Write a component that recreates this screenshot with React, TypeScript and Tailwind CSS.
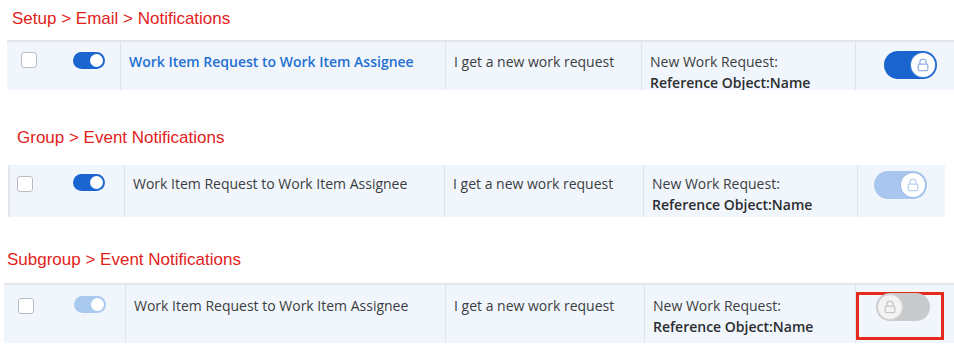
import React from 'react';

type Mode = 'on' | 'soft' | 'off';

function Lock({ color }: { color: string }) {
  return (
    <svg width="16" height="16" viewBox="0 0 14 14" fill="none" stroke={color} strokeWidth="1.1">
      <path d="M4.3 6.3V4.5a2.7 2.7 0 0 1 5.4 0v1.8" />
      <rect x="2.8" y="6.3" width="8.4" height="5.6" rx="1" />
    </svg>
  );
}

function SmallToggle({ soft }: { soft?: boolean }) {
  return (
    <div
      className={`flex h-[17px] w-[32px] items-center justify-end rounded-full pr-[2px] ${
        soft ? 'bg-[#a9c9ef]' : 'bg-[#1b65d1]'
      }`}
    >
      <div className="h-[13px] w-[13px] rounded-full bg-white" />
    </div>
  );
}

function LockToggle({ mode }: { mode: Mode }) {
  if (mode === 'off') {
    return (
      <div className="flex h-[28px] w-[54px] items-center rounded-full bg-[#c9cacc] pl-[1px]">
        <div className="flex h-[26px] w-[26px] items-center justify-center rounded-full border border-[#d4d5d7] bg-[#f3f3f4]">
          <Lock color="#c4c5c8" />
        </div>
      </div>
    );
  }
  const soft = mode === 'soft';
  return (
    <div
      className={`flex h-[28px] w-[53px] items-center justify-end rounded-full pr-[2px] ${
        soft ? 'bg-[#a9c7ee]' : 'bg-[#1a64cf]'
      }`}
    >
      <div
        className={`flex h-[24px] w-[24px] items-center justify-center rounded-full bg-white ring-1 ${
          soft ? 'ring-[#9dbde8]' : 'ring-[#3f7fd8]'
        }`}
      >
        <Lock color={soft ? '#b9cff0' : '#8fb1e6'} />
      </div>
    </div>
  );
}

function Checkbox() {
  return <div className="h-[16px] w-[16px] rounded-[3px] border border-[#b9bdc3] bg-white" />;
}

export default function App() {
  const table = "font-['Open_Sans',sans-serif] text-[14px] leading-[21px] text-[#3b3d40]";
  const head = "font-['Liberation_Sans',Arial,sans-serif] text-[17px] text-[#e2231a]";

  return (
    <div className="h-[348px] w-[954px] overflow-hidden bg-white">
      {/* Setup > Email > Notifications */}
      <div className={`flex h-[40px] items-start pl-[12px] pt-[6px] ${head}`}>Setup &gt; Email &gt; Notifications</div>
      <div className={`ml-[7px] flex h-[50px] overflow-hidden border-t-2 border-[#e3e5e8] bg-[#f1f6fc] ${table}`}>
        <div className="flex w-[113px] shrink-0 items-start pt-[10px]">
          <div className="ml-[14px]"><Checkbox /></div>
          <div className="ml-[36px]"><SmallToggle /></div>
        </div>
        <div className="w-[325px] shrink-0 border-l border-[#dfe4ea] pl-[8px] pt-[9px] font-semibold text-[#2470d2]">
          Work Item Request to Work Item Assignee
        </div>
        <div className="w-[196px] shrink-0 border-l border-[#dfe4ea] pl-[8px] pt-[9px]">I get a new work request</div>
        <div className="w-[214px] shrink-0 border-l border-[#dfe4ea] pl-[8px] pt-[9px]">
          New Work Request:
          <div className="font-semibold text-[#2a2c2f]">Reference Object:Name</div>
        </div>
        <div className="flex flex-1 items-start border-l border-[#dfe4ea] pl-[28px] pt-[9px]">
          <LockToggle mode="on" />
        </div>
      </div>

      {/* Group > Event Notifications */}
      <div className={`mt-[29px] flex h-[46px] items-start pl-[17px] pt-[6px] ${head}`}>Group &gt; Event Notifications</div>
      <div className={`ml-[8px] flex h-[52px] w-[937px] overflow-hidden border-l-2 border-[#e3e7ec] bg-[#f1f6fc] ${table}`}>
        <div className="flex w-[114px] shrink-0 items-start pt-[9px]">
          <div className="ml-[7px] mt-[2px]"><Checkbox /></div>
          <div className="ml-[40px]"><SmallToggle /></div>
        </div>
        <div className="w-[320px] shrink-0 border-l border-[#dfe4ea] pl-[8px] pt-[8px]">
          Work Item Request to Work Item Assignee
        </div>
        <div className="w-[199px] shrink-0 border-l border-[#dfe4ea] pl-[8px] pt-[8px]">I get a new work request</div>
        <div className="w-[214px] shrink-0 border-l border-[#dfe4ea] pl-[8px] pt-[8px]">
          New Work Request:
          <div className="font-semibold text-[#2a2c2f]">Reference Object:Name</div>
        </div>
        <div className="flex flex-1 items-start border-l border-[#dfe4ea] pl-[16px] pt-[6px]">
          <LockToggle mode="soft" />
        </div>
      </div>

      {/* Subgroup > Event Notifications */}
      <div className={`mt-[28px] flex h-[38px] items-start pl-[7px] pt-[2px] ${head}`}>Subgroup &gt; Event Notifications</div>
      <div className={`ml-[4px] flex h-[60px] overflow-hidden border-t-2 border-[#e3e5e8] bg-[#f1f6fc] ${table}`}>
        <div className="flex w-[121px] shrink-0 items-start pt-[11px]">
          <div className="ml-[14px] mt-[2px]"><Checkbox /></div>
          <div className="ml-[40px]"><SmallToggle soft /></div>
        </div>
        <div className="w-[320px] shrink-0 border-l border-[#dfe4ea] pl-[8px] pt-[10px]">
          Work Item Request to Work Item Assignee
        </div>
        <div className="w-[199px] shrink-0 border-l border-[#dfe4ea] pl-[8px] pt-[10px]">I get a new work request</div>
        <div className="w-[211px] shrink-0 border-l border-[#dfe4ea] pl-[8px] pt-[10px]">
          New Work Request:
          <div className="font-semibold text-[#2a2c2f]">Reference Object:Name</div>
        </div>
        <div className="flex flex-1 items-start border-l border-[#dfe4ea] pt-[7px]">
          <div className="flex h-[48px] w-[88px] items-start border-[3px] border-[#e52a1c] pl-[17px]">
            <div className="-mt-[2px]"><LockToggle mode="off" /></div>
          </div>
        </div>
      </div>
    </div>
  );
}
